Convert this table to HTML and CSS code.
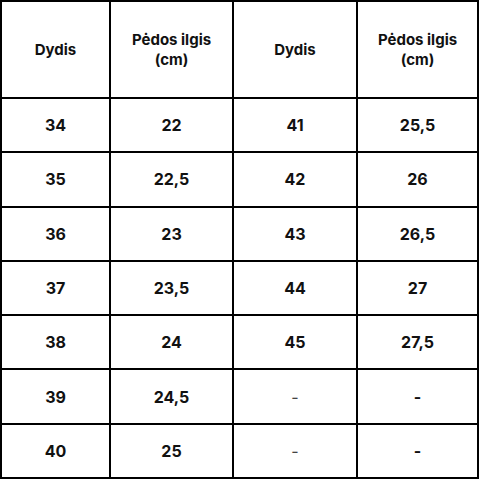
FILE: index.html
```
<!DOCTYPE html>
<html lang="lt">
<head>
<meta charset="utf-8">
<title>Dydžių lentelė</title>
<link rel="stylesheet" href="styles.css">
</head>
<body>
<div class="grid">
  <div class="cell head">Dydis</div>
  <div class="cell head">Pėdos ilgis<br>(cm)</div>
  <div class="cell head">Dydis</div>
  <div class="cell head">Pėdos ilgis<br>(cm)</div>

  <div class="cell">34</div><div class="cell">22</div><div class="cell">41</div><div class="cell">25,5</div>
  <div class="cell">35</div><div class="cell">22,5</div><div class="cell">42</div><div class="cell">26</div>
  <div class="cell">36</div><div class="cell">23</div><div class="cell">43</div><div class="cell">26,5</div>
  <div class="cell">37</div><div class="cell">23,5</div><div class="cell">44</div><div class="cell">27</div>
  <div class="cell">38</div><div class="cell">24</div><div class="cell">45</div><div class="cell">27,5</div>
  <div class="cell">39</div><div class="cell">24,5</div><div class="cell dash-light">-</div><div class="cell">-</div>
  <div class="cell">40</div><div class="cell">25</div><div class="cell dash-light">-</div><div class="cell">-</div>
</div>
</body>
</html>
```
FILE: styles.css
```
html, body {
  margin: 0;
  padding: 0;
  background: #ffffff;
}

.grid {
  display: grid;
  grid-template-columns: 107px 121px 122px 119px;
  grid-template-rows: 95px repeat(7, 52.3px);
  gap: 2px;
  padding: 2px;
  width: 479px;
  box-sizing: border-box;
  background: #000000;
  font-family: Inter, "Open Sans", "Liberation Sans", sans-serif;
  color: #111111;
}

.cell {
  background: #ffffff;
  display: flex;
  align-items: center;
  justify-content: center;
  text-align: center;
  font-weight: 700;
  font-size: 16px;
}

.head {
  font-size: 15px;
  line-height: 20px;
}

.dash-light {
  font-weight: 400;
  color: #444444;
}
```
